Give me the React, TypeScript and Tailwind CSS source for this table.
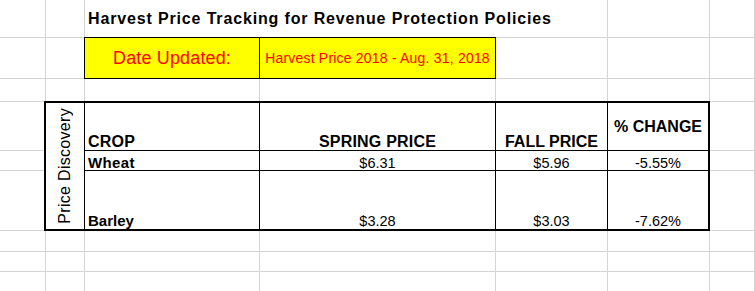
import React from "react";

const font = "font-['Liberation_Sans',Arial,sans-serif]";

const Cell: React.FC<{ className?: string; children?: React.ReactNode }> = ({
  className = "",
  children,
}) => (
  <div className={`border-r border-b border-[#d4d4d4] bg-white ${className}`}>
    {children}
  </div>
);

const blanks = (n: number, key: string) =>
  Array.from({ length: n }, (_, i) => <Cell key={`${key}-${i}`} />);

const App: React.FC = () => {
  return (
    <div className={`w-[755px] h-[291px] overflow-hidden bg-white text-black ${font}`}>
      <div className="grid grid-cols-[46px_39px_175px_236px_112px_102px_1fr] grid-rows-[38px_41px_23px_49px_20px_60px_21px_20px_20px]">
        {/* row 1 */}
        {blanks(2, "r1a")}
        <Cell className="col-span-3 flex items-center pl-[3px]">
          <span className="whitespace-nowrap text-[16px] font-bold tracking-[0.85px]">
            Harvest Price Tracking for Revenue Protection Policies
          </span>
        </Cell>
        {blanks(2, "r1b")}

        {/* row 2 */}
        {blanks(2, "r2a")}
        <Cell className="col-start-5" />
        {blanks(2, "r2b")}

        {/* row 3 */}
        {blanks(7, "r3")}

        {/* rows 4-6 */}
        <Cell className="col-start-1 row-start-4" />
        <Cell className="col-start-7 row-start-4" />
        <Cell className="col-start-1 row-start-5" />
        <Cell className="col-start-7 row-start-5" />
        <Cell className="col-start-1 row-start-6" />
        <Cell className="col-start-7 row-start-6" />

        {/* rows 7-9 */}
        {blanks(21, "r79")}

        {/* yellow box */}
        <div className="col-start-3 col-span-2 row-start-2 -ml-px -mt-px w-[412px] h-[42px] self-start justify-self-start border border-black bg-[#ffff00] grid grid-cols-[175px_1fr] text-[#ff0000]">
          <div className="border-r border-black flex items-center justify-center">
            <span className="text-[18px] tracking-[0.15px] whitespace-nowrap">Date Updated:</span>
          </div>
          <div className="flex items-center justify-center">
            <span className="text-[14px] tracking-[0.2px] whitespace-nowrap">
              Harvest Price 2018 - Aug. 31, 2018
            </span>
          </div>
        </div>

        {/* price table */}
        <div className="col-start-2 col-span-5 row-start-4 row-span-3 -ml-[2px] -mt-px w-[666px] h-[130px] self-start justify-self-start border-2 border-black bg-white grid grid-cols-[39px_175px_236px_112px_1fr] grid-rows-[48px_20px_1fr]">
          <div className="row-span-3 border-r border-black flex items-center justify-center">
            <span className="[writing-mode:vertical-rl] rotate-180 text-[16px] tracking-[0.3px] whitespace-nowrap">
              Price Discovery
            </span>
          </div>

          <div className="border-r border-b border-black flex items-end pl-[3px] leading-none">
            <span className="text-[16px] font-bold tracking-[0.2px]">CROP</span>
          </div>
          <div className="border-r border-b border-black flex items-end justify-center leading-none">
            <span className="text-[16px] font-bold tracking-[0.2px]">SPRING PRICE</span>
          </div>
          <div className="border-r border-b border-black flex items-end justify-center leading-none">
            <span className="text-[16px] font-bold">FALL PRICE</span>
          </div>
          <div className="border-b border-black flex items-center justify-center leading-none">
            <span className="text-[16px] font-bold">% CHANGE</span>
          </div>

          <div className="border-r border-b border-black flex items-end pl-[3px] leading-none">
            <span className="text-[15px] font-bold tracking-[0.4px]">Wheat</span>
          </div>
          <div className="border-r border-b border-black flex items-end justify-center leading-none">
            <span className="text-[14.5px]">$6.31</span>
          </div>
          <div className="border-r border-b border-black flex items-end justify-center leading-none">
            <span className="text-[14.5px]">$5.96</span>
          </div>
          <div className="border-b border-black flex items-end justify-center leading-none">
            <span className="text-[14.5px]">-5.55%</span>
          </div>

          <div className="border-r border-black flex items-end pl-[3px] leading-none pb-px">
            <span className="text-[15px] font-bold">Barley</span>
          </div>
          <div className="border-r border-black flex items-end justify-center leading-none pb-px">
            <span className="text-[14.5px]">$3.28</span>
          </div>
          <div className="border-r border-black flex items-end justify-center leading-none pb-px">
            <span className="text-[14.5px]">$3.03</span>
          </div>
          <div className="flex items-end justify-center leading-none pb-px">
            <span className="text-[14.5px]">-7.62%</span>
          </div>
        </div>
      </div>
    </div>
  );
};

export default App;
